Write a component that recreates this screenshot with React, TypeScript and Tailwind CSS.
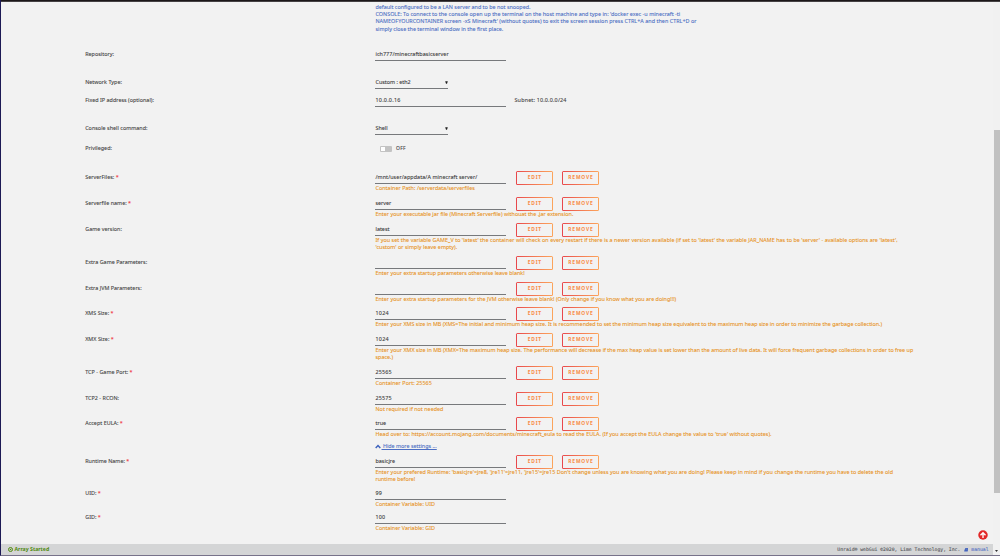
import React from "react";

type Line = { text: string; cls?: string };
type Row = {
  label: string;
  required?: boolean;
  value: string;
  valueCls?: string;
  height: string;
  hints: Line[];
  buttons?: boolean;
  more?: boolean;
};

const rows: Row[] = [
  { label: "ServerFiles:", required: true, value: "/mnt/user/appdata/A minecraft server/", valueCls: "tracking-[0.08px]", height: "h-[26px]", buttons: true, hints: [{ text: "Container Path: /serverdata/serverfiles", cls: "tracking-[0.04px]" }] },
  { label: "Serverfile name:", required: true, value: "server", height: "h-[26px]", buttons: true, hints: [{ text: "Enter your executable jar file (Minecraft Serverfile) withouat the .jar extension.", cls: "tracking-[0.01px]" }] },
  { label: "Game version:", value: "latest", height: "h-[33px]", buttons: true, hints: [{ text: "If you set the variable GAME_V to 'latest' the container will check on every restart if there is a newer version available (if set to 'latest' the variable JAR_NAME has to be 'server' - available options are 'latest',", cls: "tracking-[0.042px]" }, { text: "'custom' or simply leave empty).", cls: "tracking-[0.03px]" }] },
  { label: "Extra Game Parameters:", value: "", height: "h-[26px]", buttons: true, hints: [{ text: "Enter your extra startup parameters otherwise leave blank!" }] },
  { label: "Extra JVM Parameters:", value: "", height: "h-[25px]", buttons: true, hints: [{ text: "Enter your extra startup parameters for the JVM otherwise leave blank! (Only change if you know what you are doing!!!)", cls: "tracking-[0.006px]" }] },
  { label: "XMS Size:", required: true, value: "1024", valueCls: "tracking-[0.25px]", height: "h-[26px]", buttons: true, hints: [{ text: "Enter your XMS size in MB (XMS=The initial and minimum heap size. It is recommended to set the minimum heap size equivalent to the maximum heap size in order to minimize the garbage collection.)" }] },
  { label: "XMX Size:", required: true, value: "1024", valueCls: "tracking-[0.25px]", height: "h-[33px]", buttons: true, hints: [{ text: "Enter your XMX size in MB (XMX=The maximum heap size. The performance will decrease if the max heap value is set lower than the amount of live data. It will force frequent garbage collections in order to free up", cls: "tracking-[0.005px]" }, { text: "space.)" }] },
  { label: "TCP - Game Port:", required: true, value: "25565", valueCls: "tracking-[0.2px]", height: "h-[26px]", buttons: true, hints: [{ text: "Container Port: 25565", cls: "tracking-[0.05px]" }] },
  { label: "TCP2 - RCON:", value: "25575", valueCls: "tracking-[0.2px]", height: "h-[25px]", buttons: true, hints: [{ text: "Not required if not needed", cls: "tracking-[0.02px]" }] },
  { label: "Accept EULA:", required: true, value: "true", height: "h-[38px]", buttons: true, more: true, hints: [{ text: "Head over to: https://account.mojang.com/documents/minecraft_eula to read the EULA. (If you accept the EULA change the value to 'true' without quotes).", cls: "tracking-[0.037px]" }] },
  { label: "Runtime Name:", required: true, value: "basicjre", height: "h-[32px]", buttons: true, hints: [{ text: "Enter your prefered Runtime: 'basicjre'=jre8, 'jre11'=jre11, 'jre15'=jre15 Don't change unless you are knowing what you are doing! Please keep in mind if you change the runtime you have to delete the old", cls: "tracking-[0.03px]" }, { text: "runtime before!" }] },
  { label: "UID:", required: true, value: "99", valueCls: "tracking-[0.2px]", height: "h-[24px]", hints: [{ text: "Container Variable: UID" }] },
  { label: "GID:", required: true, value: "100", valueCls: "tracking-[0.2px]", height: "h-[25px]", hints: [{ text: "Container Variable: GID" }] },
];

function Label({ text, required }: { text: string; required?: boolean }) {
  return (
    <div className="w-[290.3px] shrink-0 leading-[13px] tracking-[0.02px]">
      {text}
      {required && <span className="text-[#f0303a]"> *</span>}
    </div>
  );
}

function Field({ value, cls = "" }: { value: string; cls?: string }) {
  return <div className={`h-[13px] w-[130.5px] shrink-0 border-b border-[#77797c] leading-[12px] text-[#3c3c3c] ${cls}`}>{value}</div>;
}

function Select({ value }: { value: string }) {
  return (
    <div className="flex h-[13px] w-[72.5px] shrink-0 justify-between border-b border-[#77797c] leading-[12px] text-[#3c3c3c]">
      <span>{value}</span>
      <svg className="mt-[5px] h-[3px] w-[3px]" viewBox="0 0 3 3"><path d="M.2 .2H2.8L2 2.8H1Z" fill="#222" /></svg>
    </div>
  );
}

function Button({ text }: { text: string }) {
  return (
    <div className="h-[14px] w-[37px] rounded-[1.5px] bg-linear-to-r from-[#e8474c] to-[#fca55c] p-px">
      <div className="flex h-full items-center justify-center bg-[#f2f2f2] pl-[0.8px] text-[4.9px] font-bold tracking-[0.8px] text-[#f98a45] [-webkit-text-stroke:0px]">{text}</div>
    </div>
  );
}

export default function App() {
  return (
    <div className="flex h-[556px] w-[1000px] flex-col overflow-hidden border-b border-l border-b-[#77728a] border-l-[#1d1a55] bg-[#f2f2f2] font-['Noto_Sans',sans-serif] text-[5.4px] text-[#444] [-webkit-text-stroke:0.1px]">
      <div className="h-[2px] shrink-0 border-b border-[#454244] bg-[#1c1719]" />
      <div className="flex h-[542px] shrink-0">
        <main className="w-[992px] overflow-hidden pl-[84.2px]">
          <div className="h-[46px] whitespace-nowrap pl-[290.3px] pt-[1.6px] leading-[7.4px] text-[#4c6fc4]">
            <div>default configured to be a LAN server and to be not snooped.</div>
            <div className="tracking-[0.02px]">CONSOLE: To connect to the console open up the terminal on the host machine and type in: 'docker exec -u minecraft -ti</div>
            <div className="tracking-[0.04px]">NAMEOFYOURCONTAINER screen -xS Minecraft' (without quotes) to exit the screen session press CTRL+A and then CTRL+D or</div>
            <div>simply close the terminal window in the first place.</div>
          </div>
          <div className="flex h-[28px]"><Label text="Repository:" /><Field value="ich777/minecraftbasicserver" cls="tracking-[0.06px]" /></div>
          <div className="flex h-[18px]"><Label text="Network Type:" /><Select value="Custom : eth2" /></div>
          <div className="flex h-[28px]"><Label text="Fixed IP address (optional):" /><Field value="10.0.0.16" cls="tracking-[0.25px]" /><span className="pl-[8.5px] leading-[12px] tracking-[0.18px]">Subnet: 10.0.0.0/24</span></div>
          <div className="flex h-[19px]"><Label text="Console shell command:" /><Select value="Shell" /></div>
          <div className="flex h-[30px] pt-px">
            <Label text="Privileged:" />
            <div className="flex h-[13px] items-center pl-[4.5px]">
              <span className="flex h-[6px] w-[12px] rounded-[1px] bg-[#c3c3c3] p-px"><span className="w-[4px] bg-white" /></span>
              <span className="pl-1 text-[5px] tracking-[0.3px]">OFF</span>
            </div>
          </div>
          {rows.map((row) => (
            <div key={row.label} className={`flex ${row.height}`}>
              <Label text={row.label} required={row.required} />
              <div className="whitespace-nowrap">
                <div className="flex h-[13px]">
                  <Field value={row.value} cls={row.valueCls} />
                  {row.buttons && <div className="flex gap-[9px] pl-[10px]"><Button text="EDIT" /><Button text="REMOVE" /></div>}
                </div>
                <div className="pt-px leading-[7.4px] text-[#e8931f]">
                  {row.hints.map((hint) => <div key={hint.text} className={hint.cls}>{hint.text}</div>)}
                </div>
                {row.more && (
                  <div className="flex items-center pt-[4px] leading-[8px] text-[#4c6fc4]">
                    <svg className="h-[5px] w-[6px]" viewBox="0 0 6 5"><path d="M.7 4L3 1.6L5.3 4" fill="none" stroke="#3d62bd" strokeWidth="1.5" /></svg>
                    <span className="whitespace-pre underline"> Hide more settings ...</span>
                  </div>
                )}
              </div>
            </div>
          ))}
        </main>
        <div className="flex w-[7px] flex-col bg-[#f1f1f1] pl-px pt-[128px]">
          <div className="h-[363px] w-[6px] bg-[#c1c1c1]" />
          <div className="flex-1" />
        </div>
      </div>
      <div className="flex h-[11px] shrink-0">
        <footer className="flex w-[992px] items-center justify-between bg-[#d4d5d6] pl-[6.5px] pr-[4.5px] pt-px">
          <div className="flex items-center gap-[2px] text-[5.2px] font-bold text-[#4f8a10] [-webkit-text-stroke:0px]">
            <svg className="h-[5px] w-[5px]" viewBox="0 0 10 10"><circle cx="5" cy="5" r="4" fill="none" stroke="#4f8a10" strokeWidth="2" /><circle cx="5" cy="5" r="1.6" fill="#4f8a10" /></svg>
            Array Started
          </div>
          <div className="flex items-center font-['DejaVu_Sans_Mono',monospace] text-[4.75px] text-[#55565a]">
            <span>Unraid® webGui ©2020, Lime Technology, Inc.</span>
            <svg className="ml-[3.5px] mr-[3px] h-[4.5px] w-[4.5px]" viewBox="0 0 10 10"><path d="M3 0H10L8 8H2Q0 8 .5 6Z" fill="#4464bd" /><path d="M1 8.7H8M4 2.5H8" stroke="#8ca0da" strokeWidth="1" /></svg>
            <span className="text-[#5270c4]">manual</span>
          </div>
        </footer>
        <div className="flex w-[7px] items-end justify-center bg-[#f1f1f1] pb-[3px]">
          <svg className="h-[2px] w-[3px]" viewBox="0 0 3 2"><path d="M0 0H3L1.5 2Z" fill="#333" /></svg>
        </div>
      </div>
      <svg className="absolute left-[978px] top-[530px] h-[10px] w-[10px]" viewBox="0 0 20 20">
        <circle cx="10" cy="10" r="9.5" fill="#e22828" />
        <path d="M10 16V6M5 10.5L10 5.5L15 10.5" fill="none" stroke="#fff" strokeWidth="2.7" />
      </svg>
    </div>
  );
}
